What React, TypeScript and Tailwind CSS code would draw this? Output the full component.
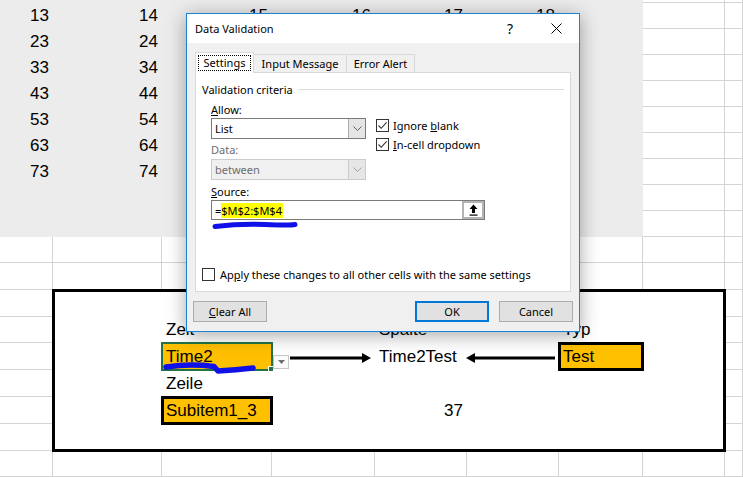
import type React from "react"

const colStart = [
  "col-start-1",
  "col-start-2",
  "col-start-3",
  "col-start-4",
  "col-start-5",
  "col-start-6",
  "col-start-7",
  "col-start-8",
  "col-start-9",
]

const rowStart = [
  "row-start-1",
  "row-start-2",
  "row-start-3",
  "row-start-4",
  "row-start-5",
  "row-start-6",
  "row-start-7",
  "row-start-8",
  "row-start-9",
  "row-start-10",
  "row-start-11",
  "row-start-12",
  "row-start-13",
  "row-start-14",
  "row-start-15",
  "row-start-16",
  "row-start-17",
  "row-start-18",
  "row-start-19",
]

// only the cells not hidden behind the dialog
const numberCells: { r: number; c: number }[] = [
  ...[0, 1, 2, 3, 4, 5].map((c) => ({ r: 1, c })),
  ...[2, 3, 4, 5, 6, 7].flatMap((r) => [0, 1].map((c) => ({ r, c }))),
]

function Checkbox({ checked }: { checked?: boolean }) {
  return (
    <span className="flex h-[13px] w-[13px] shrink-0 items-center justify-center border border-[#333333] bg-white">
      {checked && (
        <svg width="11" height="11" viewBox="0 0 11 11">
          <path d="M1.5 5.5 L4.2 8.3 L9.6 2.4" fill="none" stroke="#333333" strokeWidth="1.1" />
        </svg>
      )}
    </span>
  )
}

function Chevron({ color }: { color: string }) {
  return (
    <svg width="9" height="5" viewBox="0 0 9 5">
      <path d="M0.5 0.5 L4.5 4.5 L8.5 0.5" fill="none" stroke={color} strokeWidth="1" />
    </svg>
  )
}

function Select({ value, disabled }: { value: string; disabled?: boolean }) {
  return (
    <div
      className={`flex h-[21px] w-[155px] border ${
        disabled ? "border-[#cccccc] bg-[#f0f0f0] text-[#6d6d6d]" : "border-[#7a7a7a] bg-white text-black"
      }`}
    >
      <div className="flex flex-1 items-center pl-[3px]">{value}</div>
      <div
        className={`flex w-[17px] items-center justify-center border-l ${
          disabled ? "border-[#cccccc] bg-[#e6e6e6]" : "border-[#adadad] bg-[#e5e5e5]"
        }`}
      >
        <Chevron color={disabled ? "#a0a0a0" : "#606060"} />
      </div>
    </div>
  )
}

function DialogButton({ children, primary }: { children: React.ReactNode; primary?: boolean }) {
  return (
    <div
      className={`flex h-[21px] w-[74px] items-center justify-center bg-[#e1e1e1] ${
        primary ? "border-2 border-[#0078d7]" : "border border-[#adadad]"
      }`}
    >
      {children}
    </div>
  )
}

function DataValidationDialog() {
  return (
    <div className="absolute left-[186px] top-[13px] flex h-[319px] w-[394px] flex-col border border-[#1883d7] bg-[#f0f0f0] font-['Noto_Sans',sans-serif] text-[11px] leading-[15px] text-black shadow-[0_3px_18px_rgba(0,0,0,0.35)]">
      <div className="flex h-[29px] items-center justify-between bg-white pl-[8px]">
        <span>Data Validation</span>
        <div className="flex h-full">
          <div className="flex w-[46px] items-center justify-center text-[14px]">?</div>
          <div className="flex w-[46px] items-center justify-center">
            <svg width="11" height="11" viewBox="0 0 11 11">
              <path d="M0.5 0.5 L10.5 10.5 M10.5 0.5 L0.5 10.5" stroke="#000" strokeWidth="1" />
            </svg>
          </div>
        </div>
      </div>

      <div className="flex flex-1 flex-col px-[8px] pt-[9px] pb-[9px]">
        <div className="flex h-[20px] items-end">
          <div className="relative z-10 -mb-px flex h-[21px] w-[59px] items-center justify-center border border-b-0 border-[#d9d9d9] bg-white">
            <span className="border border-dotted border-black px-[5px] leading-[14px]">Settings</span>
          </div>
          <div className="flex h-[18px] w-[93px] items-center justify-center border-t border-r border-[#d9d9d9]">
            Input Message
          </div>
          <div className="flex h-[18px] w-[68px] items-center justify-center border-t border-r border-[#d9d9d9]">
            Error Alert
          </div>
        </div>

        <div className="flex h-[220px] w-[376px] flex-col border border-[#d9d9d9] bg-white px-[6px] pt-[9px] pb-[9px]">
          <div className="flex h-[15px] items-center">
            <span>Validation criteria</span>
            <div className="ml-[5px] h-px flex-1 bg-[#dcdcdc]" />
          </div>

          <div className="ml-[9px] flex">
            <div className="flex w-[155px] flex-col">
              <div className="mt-[5px] h-[15px]">
                <span className="underline">A</span>llow:
              </div>
              <div className="mt-[1px]">
                <Select value="List" />
              </div>
              <div className="mt-[3px] h-[15px] text-[#6d6d6d]">Data:</div>
              <div className="mt-[2px]">
                <Select value="between" disabled />
              </div>
            </div>
            <div className="ml-[10px] flex flex-col pt-[21px]">
              <div className="flex h-[15px] items-center gap-[4px]">
                <Checkbox checked />
                <span>
                  Ignore <span className="underline">b</span>lank
                </span>
              </div>
              <div className="mt-[4px] flex h-[15px] items-center gap-[4px]">
                <Checkbox checked />
                <span>
                  <span className="underline">I</span>n-cell dropdown
                </span>
              </div>
            </div>
          </div>

          <div className="ml-[9px] mt-[4px] h-[15px]">
            <span className="underline">S</span>ource:
          </div>
          <div className="ml-[9px] mt-[1px] flex h-[20px] w-[274px] border border-[#7a7a7a] bg-white">
            <div className="flex flex-1 items-center pl-[3px]">
              =<span className="bg-[#ffff00] pr-px">$M$2:$M$4</span>
            </div>
            <div className="flex w-[22px] items-center justify-center border-2 border-[#b4b4b4] bg-white">
              <svg width="9" height="12" viewBox="0 0 9 12">
                <path d="M4.5 0.5 L8.5 5 L6 5 L6 9 L3 9 L3 5 L0.5 5 Z" fill="#000" />
                <rect x="0.5" y="10.5" width="8" height="1.2" fill="#000" />
              </svg>
            </div>
          </div>

          <div className="flex-1" />
          <div className="flex h-[15px] items-center gap-[5px]">
            <Checkbox />
            <span>
              Ap<span className="underline">p</span>ly these changes to all other cells with the same settings
            </span>
          </div>
        </div>

        <div className="-mx-[2px] mt-[9px] flex items-center">
          <DialogButton>
            <span>
              <span className="underline">C</span>lear All
            </span>
          </DialogButton>
          <div className="flex-1" />
          <DialogButton primary>OK</DialogButton>
          <div className="w-[10px]" />
          <DialogButton>Cancel</DialogButton>
        </div>
      </div>
    </div>
  )
}

export default function App() {
  return (
    <div className="relative h-[477px] w-[743px] overflow-hidden bg-white">
      <div className="grid h-[477px] grid-cols-[53px_109px_110px_103px_92px_92px_84px_82px_1fr] grid-rows-[3px_repeat(9,26px)_26px_27px_27px_26px_27px_27px_27px_27px_26px] font-['Liberation_Sans',Arial,sans-serif] text-[17px] leading-[20px] text-black">
        {rowStart.map((row) =>
          colStart.map((col) => (
            <div key={`${row}-${col}`} className={`${row} ${col} border-r border-b border-[#d4d4d4]`} />
          ))
        )}

        <div className="col-start-1 col-end-8 row-start-1 row-end-11 bg-[#ececec]" />

        {numberCells.map(({ r, c }) => (
          <div
            key={`n-${r}-${c}`}
            className={`${rowStart[r]} ${colStart[c]} flex items-center justify-end pr-[4px]`}
          >
            {r * 10 + 3 + c}
          </div>
        ))}

        <div className="col-start-2 col-end-9 row-start-13 row-end-19 -m-px border-[3px] border-black bg-white" />

        <div className="col-start-3 row-start-14 flex items-center pl-[4px]">Zeit</div>
        <div className="col-start-5 row-start-14 flex items-center pl-[4px]">Spalte</div>
        <div className="col-start-7 row-start-14 flex items-center pl-[4px]">Typ</div>

        <div className="col-start-3 row-start-15 -m-px flex items-center border-2 border-[#217346] bg-[#ffc000] pl-[3px]">
          Time2
        </div>
        <div className="col-start-5 row-start-15 flex items-center whitespace-nowrap pl-[4px]">Time2Test</div>
        <div className="col-start-7 row-start-15 -m-px flex items-center border-[3px] border-black bg-[#ffc000] pl-[2px]">
          Test
        </div>

        <div className="col-start-3 row-start-16 flex items-center pl-[4px]">Zeile</div>

        <div className="col-start-3 row-start-17 -m-px flex items-center border-[3px] border-black bg-[#ffc000] pl-[2px]">
          Subitem1_3
        </div>
        <div className="col-start-5 row-start-17 flex items-center justify-end pr-[4px]">37</div>
      </div>

      <div className="absolute left-[268px] top-[366px] h-[6px] w-[6px] border border-white bg-[#217346]" />
      <div className="absolute left-[273px] top-[355px] flex h-[14px] w-[16px] items-center justify-center border border-[#c6c6c6] bg-[#fafafa]">
        <svg width="7" height="4" viewBox="0 0 7 4">
          <path d="M0 0 L7 0 L3.5 4 Z" fill="#6e6e6e" />
        </svg>
      </div>

      <DataValidationDialog />

      <svg className="pointer-events-none absolute left-0 top-0" width="743" height="477" viewBox="0 0 743 477">
        <path d="M290 358 L363 358" stroke="#000" strokeWidth="3" />
        <path d="M362 353 L371 358 L362 363 Z" fill="#000" />
        <path d="M555 358 L474 358" stroke="#000" strokeWidth="3" />
        <path d="M475 353 L466 358 L475 363 Z" fill="#000" />
        <path
          d="M215 226.5 Q 240 223.5 265 224.5 T 295 224.5"
          fill="none"
          stroke="#1010e8"
          strokeWidth="5"
          strokeLinecap="round"
        />
        <path
          d="M166 367 Q 190 363.5 214 366.5 L 218 371 Q 236 370 253 368"
          fill="none"
          stroke="#1010e8"
          strokeWidth="5.5"
          strokeLinecap="round"
          strokeLinejoin="round"
        />
      </svg>
    </div>
  )
}
